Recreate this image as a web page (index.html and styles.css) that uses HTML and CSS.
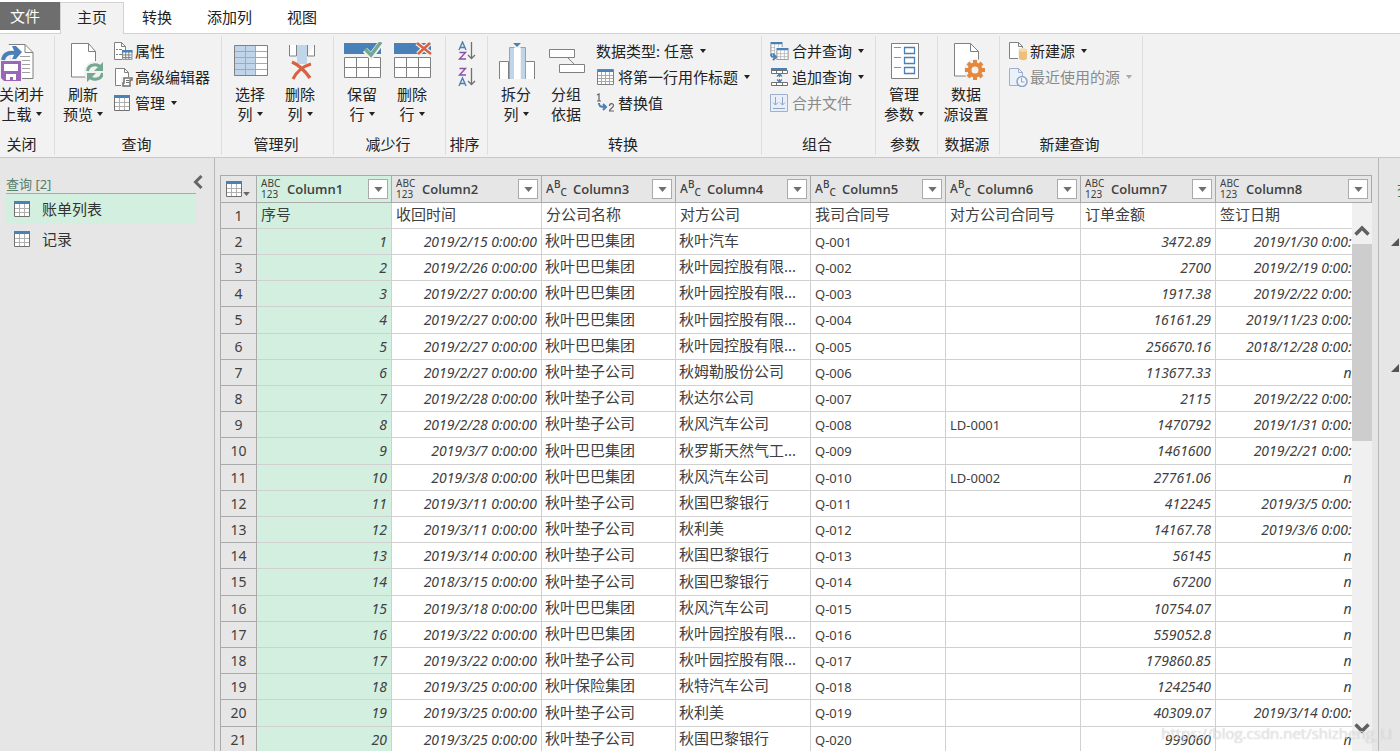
FILE: index.html
```html
<!DOCTYPE html>
<html lang="zh-CN">
<head>
<meta charset="utf-8">
<title>Power Query 编辑器</title>
<link rel="stylesheet" href="styles.css">
</head>
<body>
<svg class="defs" aria-hidden="true">
  <symbol id="i-table" viewBox="0 0 16 16"><path fill="#fff" d="M0 0h16v16H0z"/><path fill="none" stroke="#b0b0b0" d="M5.5 3v12M10.5 3v12M1 7.5h14M1 11.5h14"/><path fill="none" stroke="#707070" d="M.5 3v12.5h15V3"/><path fill="#4a80b8" d="M0 0h16v3H0z"/></symbol>
  <symbol id="i-down" viewBox="0 0 10 6"><path d="M0 0h10L5 6z"/></symbol>
</svg>
<div class="app">
  <nav class="tabs">
    <button class="file">文件</button>
    <button class="tab active">主页</button>
    <button class="tab">转换</button>
    <button class="tab">添加列</button>
    <button class="tab">视图</button>
  </nav>

  <div class="ribbon">
    <section class="group g-close">
      <div class="tools">
        <button class="big">
          <svg viewBox="0 0 40 40"><path fill="#fff" stroke="#808080" d="M9 2.500h16l8 8v26H11z"/><path fill="none" stroke="#808080" d="M25 2.500v8h8"/><path stroke="#a0a0a0" d="M20 14.500h10M22 18.500h8M22 22.500h8M22 26.500h8M22 30.500h8"/><path fill="#f2f2f2" d="M0 3h10v17H0zM6 17h16v20H6z"/><path d="M3 18c1-6 6-8 12-7" fill="none" stroke="#4a80b8" stroke-width="4"/><path fill="#4a80b8" d="M12 4h4l6 6-6 7h-4l3-6z"/><path fill="#9a66b8" d="M1 19h20v20H4l-3-3z"/><path fill="#fff" d="M4 22h14v7H4zM6 32h10v6h-3v-3h-3v3H6z"/></svg>
          <span>关闭并<br>上载<i class="caret"></i></span>
        </button>
      </div>
      <h2>关闭</h2>
    </section>
    <section class="group g-query">
      <div class="tools">
        <button class="big">
          <svg viewBox="0 0 40 40"><path fill="#fff" stroke="#808080" d="M8.500 1.500h17l7 8V35h-24z"/><path fill="none" stroke="#808080" d="M25.500 1.500v8h7"/><circle cx="32" cy="30" r="11" fill="#f2f2f2"/><g fill="none" stroke="#74a893" stroke-width="3"><path d="M24.500 29c1-7 10-8 14-3"/><path d="M39.500 31c-1 7-10 8-14 3"/></g><path fill="#74a893" d="M40 20v9h-9zM24 40v-9h9z"/></svg>
          <span>刷新<br>预览<i class="caret"></i></span>
        </button>
        <div class="stack">
          <button class="small"><svg viewBox="0 0 20 20"><path fill="#fff" stroke="#808080" d="M1.500 1.500h7l4 4v13h-11z"/><path fill="none" stroke="#808080" d="M8.500 1.500v4h4M3 8.500h2M6 8.500h3M3 13.500h2M6 13.500h3"/><g transform="translate(9 9) scale(.62)"><path fill="#fff" d="M0 0h16v16H0z"/><path fill="none" stroke="#777" stroke-width="1.500" d="M1 3v12h15V3M6 3v12M11 3v12M1 8h14M1 12h14"/><path fill="#4a80b8" d="M0 0h17v4H0z"/></g></svg>属性</button>
          <button class="small"><svg viewBox="0 0 20 20"><path fill="#fff" stroke="#808080" d="M2.500 1.500h9l4 4v13h-13z"/><path fill="none" stroke="#808080" d="M11.500 1.500v4h4"/><path fill="#f2f2f2" d="M8 10h12v10H8z"/><path fill="#fff" stroke="#707070" stroke-width="1.500" d="M11 11h8v2h-2v6h-7v-3h1z"/><path stroke="#707070" d="M13 13.500h3M13 15.500h3"/></svg>高级编辑器</button>
          <button class="small"><svg viewBox="0 0 20 20"><use href="#i-table" x="1" y="2" width="16" height="16"/></svg>管理<i class="caret"></i></button>
        </div>
      </div>
      <h2>查询</h2>
    </section>
    <section class="group g-cols">
      <div class="tools">
        <button class="big">
          <svg viewBox="0 0 40 40"><path fill="#fff" d="M4 4h33v30H4z"/><path fill="#c0d4ea" d="M4 4h22v30H4z"/><path fill="none" stroke="#a8a8a8" d="M15.500 4v29M25.500 4v29M5 9.500h32M5 15.500h32M5 21.500h32M5 27.500h32"/><path fill="none" stroke="#808080" d="M4.500 3.500h33v30h-33z"/></svg>
          <span>选择<br>列<i class="caret"></i></span>
        </button>
        <button class="big">
          <svg viewBox="0 0 40 40"><path fill="#fff" stroke="#808080" d="M9.500 3v11h7V3M27.500 14V3M27.500 14h7V3"/><path fill="#c0d4ea" d="M17 3h10v19H17z"/><path fill="none" stroke="#d9613f" stroke-width="3.500" d="M12 20c7 3 13 9 18 16"/><path fill="none" stroke="#d9613f" stroke-width="3" d="M31 22c-7 2-14 7-18 15"/></svg>
          <span>删除<br>列<i class="caret"></i></span>
        </button>
      </div>
      <h2>管理列</h2>
    </section>
    <section class="group g-rows">
      <div class="tools">
        <button class="big">
          <svg viewBox="0 0 40 40"><path fill="#4a80b8" d="M2 1h37v11H2z"/><path fill="#fff" stroke="#808080" d="M2.500 15.500h36v20h-36zM14.500 15.500v20M26.500 15.500v20M2.500 25.500h36"/><path fill="none" stroke="#f2f2f2" stroke-width="6" d="M23 8l6 6L39 1"/><path fill="none" stroke="#74a893" stroke-width="3.500" d="M23 7l6 6L39 0"/></svg>
          <span>保留<br>行<i class="caret"></i></span>
        </button>
        <button class="big">
          <svg viewBox="0 0 40 40"><path fill="#4a80b8" d="M2 1h37v11H2z"/><path fill="#fff" stroke="#808080" d="M2.500 15.500h36v20h-36zM14.500 15.500v20M26.500 15.500v20M2.500 25.500h36"/><path fill="none" stroke="#f2f2f2" stroke-width="5" d="M25 1l14 11M38 1L26 12"/><path fill="none" stroke="#d9613f" stroke-width="2.500" d="M25 1l14 11M38 1L26 12"/></svg>
          <span>删除<br>行<i class="caret"></i></span>
        </button>
      </div>
      <h2>减少行</h2>
    </section>
    <section class="group g-sort">
      <div class="tools sorts">
        <button class="sort" aria-label="升序排序"><svg viewBox="0 0 20 20"><path fill="none" stroke="#4a80b8" stroke-width="1.400" d="M2 9l3.500-8L9 9M3 6.500h5"/><path fill="none" stroke="#8c50a8" stroke-width="1.400" d="M2.500 11.500h6l-6 6.500h6.500"/><path fill="none" stroke="#707070" stroke-width="1.300" d="M14.500 1v16M11 14l3.500 3.500L18 14"/></svg></button>
        <button class="sort" aria-label="降序排序"><svg viewBox="0 0 20 20"><path fill="none" stroke="#8c50a8" stroke-width="1.400" d="M2.500 1.500h6L2.500 8H9"/><path fill="none" stroke="#4a80b8" stroke-width="1.400" d="M2 19l3.500-8L9 19M3 16.500h5"/><path fill="none" stroke="#707070" stroke-width="1.300" d="M14.500 1v16M11 14l3.500 3.500L18 14"/></svg></button>
      </div>
      <h2>排序</h2>
    </section>
    <section class="group g-transform">
      <div class="tools">
        <button class="big">
          <svg viewBox="0 0 40 40"><path fill="#fff" stroke="#808080" d="M3.500 37V19.500h9V37M29.500 37V19.500h9V37"/><path fill="#c0d4ea" d="M14 5h4v32h-4zM25 5h4v32h-4z"/><path fill="none" stroke="#a0a0a0" d="M13.500 37V5.500h5M29.500 37V5.500h-5"/><path fill="#fff" d="M18 6h6v31h-6z"/><path fill="#4a80b8" d="M17 1h8l-4 4z"/></svg>
          <span>拆分<br>列<i class="caret"></i></span>
        </button>
        <button class="big">
          <svg viewBox="0 0 40 40"><path fill="none" stroke="#808080" d="M22 16l7 7"/><path fill="#fff" stroke="#808080" d="M3.500 7.500h25v8h-25zM13.500 22.500h25v8h-25z"/></svg>
          <span>分组<br>依据</span>
        </button>
        <div class="stack">
          <button class="small">数据类型: 任意<i class="caret"></i></button>
          <button class="small"><svg viewBox="0 0 20 20"><path fill="#fff" stroke="#808080" d="M1.500 2.500h16v15h-16z"/><path fill="#4a80b8" d="M2 3h15v2H2z"/><path fill="none" stroke="#a8a8a8" d="M5.500 5v12M9.500 5v12M13.500 5v12M2 8.500h15M2 11.500h15M2 14.500h15"/></svg>将第一行用作标题<i class="caret"></i></button>
          <button class="small"><svg viewBox="0 0 20 20"><path fill="none" stroke="#606060" stroke-width="1.200" d="M1 2l2-1v7M1 8h4M13.500 13c0-3 4-3 4-.5 0 2-4 3.500-4 5.500H18"/><path fill="none" stroke="#4a80b8" stroke-width="2" d="M3 10c0 3 1 4 6 4M7 11l3 3-3 3"/></svg>替换值</button>
        </div>
      </div>
      <h2>转换</h2>
    </section>
    <section class="group g-combine">
      <div class="tools">
        <div class="stack">
          <button class="small"><svg viewBox="0 0 20 20"><use href="#i-table" x="0" y="1" width="13" height="12"/><path fill="#f2f2f2" d="M5 6h15v14H5z"/><use href="#i-table" x="6" y="7" width="13" height="12"/><path fill="none" stroke="#4a80b8" stroke-width="2" d="M1 13c0 3 1 3 5 3M3 13l3 3-3 3"/></svg>合并查询<i class="caret"></i></button>
          <button class="small"><svg viewBox="0 0 20 20"><path fill="#4a80b8" d="M1 1h16v3H1z"/><path fill="#fff" stroke="#707070" d="M1.500 3.500h16v3h-16zM1.500 15.500h16v3h-16zM6.500 4v2M12.500 4v2M6.500 16v2M12.500 16v2"/><path fill="none" stroke="#4a80b8" stroke-width="1.300" d="M9.500 7v3M7 9.500L9.500 7 12 9.500M9.500 12v3M7 12.500l2.500 2.500 2.500-2.500"/></svg>追加查询<i class="caret"></i></button>
          <button class="small" disabled><svg viewBox="0 0 20 20"><path fill="#e8eff8" stroke="#9fb0cc" d="M.5 1.500h17v17H.500z"/><path fill="none" stroke="#8fa5c8" d="M3 15.500h12M5.500 4v8M3 9.500l2.500 2.500L8 9.500M12.500 4v8M10 9.500l2.500 2.500L15 9.500"/></svg>合并文件</button>
        </div>
      </div>
      <h2>组合</h2>
    </section>
    <section class="group g-params">
      <div class="tools">
        <button class="big">
          <svg viewBox="0 0 40 40"><path fill="#fff" stroke="#808080" d="M7.500 1.500h27v35h-27z"/><path stroke="#909090" d="M10 5.500h7M10 15.500h7M10 25.500h7"/><path fill="#fff" stroke="#4a80b8" stroke-width="1.300" d="M20.500 5.500h10v6h-10zM20.500 15.500h10v6h-10zM20.500 25.500h10v6h-10z"/></svg>
          <span>管理<br>参数<i class="caret"></i></span>
        </button>
      </div>
      <h2>参数</h2>
    </section>
    <section class="group g-source">
      <div class="tools">
        <button class="big">
          <svg viewBox="0 0 40 40"><path fill="#fff" stroke="#808080" d="M8.500 1.500h16l8 8V34h-24z"/><path fill="none" stroke="#808080" d="M24.500 1.500v8h8"/><circle cx="29" cy="28" r="11" fill="#f2f2f2"/><circle cx="29" cy="28" r="5.500" fill="none" stroke="#e5873c" stroke-width="4"/><path fill="none" stroke="#e5873c" stroke-width="4" d="M29 18v4M29 34v4M19 28h4M35 28h4M22 21l3 3M33 32l3 3M22 35l3-3M33 24l3-3"/></svg>
          <span>数据<br>源设置</span>
        </button>
      </div>
      <h2>数据源</h2>
    </section>
    <section class="group g-new">
      <div class="tools">
        <div class="stack">
          <button class="small"><svg viewBox="0 0 20 20"><path fill="#fff" stroke="#808080" d="M1.500 1.500h9l4 4v12h-13z"/><path fill="none" stroke="#808080" d="M10.500 1.500v4h4"/><path fill="#f2f2f2" d="M10 7h10v12H10z"/><path fill="#ecc07c" d="M11 9v8c0 3 8 3 8 0V9z"/><ellipse cx="15" cy="9" rx="4" ry="1.800" fill="#f5d9a8"/></svg>新建源<i class="caret"></i></button>
          <button class="small" disabled><svg viewBox="0 0 20 20"><path fill="#eaf1fa" stroke="#9fb0cc" d="M1.500 1.500h9l4 4v13h-13z"/><path fill="none" stroke="#9fb0cc" d="M10.500 1.500v4h4"/><circle cx="14" cy="14.500" r="5" fill="#f2f6fb" stroke="#8fa5c8" stroke-width="1.500"/><path fill="none" stroke="#8fa5c8" d="M13.500 11v4h3"/></svg>最近使用的源<i class="caret"></i></button>
        </div>
      </div>
      <h2>新建查询</h2>
    </section>
  </div>

  <div class="work">
    <aside class="queries">
      <div class="qhead"><span>查询 [2]</span><button aria-label="折叠"><svg viewBox="0 0 10 14"><path fill="none" stroke="#666" stroke-width="3" d="M8.500 1L2.500 7l6 6"/></svg></button></div>
      <button class="query selected"><svg><use href="#i-table"/></svg>账单列表</button>
      <button class="query"><svg><use href="#i-table"/></svg>记录</button>
    </aside>

    <main class="preview">
      <div class="sheet">
        <table>
          <colgroup><col class="c-num"><col class="c-std"><col class="c-date"><col class="c-name"><col class="c-std"><col class="c-std"><col class="c-std"><col class="c-std"><col></colgroup>
          <thead><tr>
            <th><div class="corner"><svg class="grid"><use href="#i-table"/></svg><svg class="tri"><use href="#i-down"/></svg></div></th>
            <th class="sel"><div class="head"><span class="any">ABC<br>123</span><b>Column1</b><button aria-label="筛选 Column1"><svg><use href="#i-down"/></svg></button></div></th>
            <th><div class="head"><span class="any">ABC<br>123</span><b>Column2</b><button aria-label="筛选 Column2"><svg><use href="#i-down"/></svg></button></div></th>
            <th><div class="head"><span class="abc">A<sup>B</sup><sub>C</sub></span><b>Column3</b><button aria-label="筛选 Column3"><svg><use href="#i-down"/></svg></button></div></th>
            <th><div class="head"><span class="abc">A<sup>B</sup><sub>C</sub></span><b>Column4</b><button aria-label="筛选 Column4"><svg><use href="#i-down"/></svg></button></div></th>
            <th><div class="head"><span class="abc">A<sup>B</sup><sub>C</sub></span><b>Column5</b><button aria-label="筛选 Column5"><svg><use href="#i-down"/></svg></button></div></th>
            <th><div class="head"><span class="abc">A<sup>B</sup><sub>C</sub></span><b>Column6</b><button aria-label="筛选 Column6"><svg><use href="#i-down"/></svg></button></div></th>
            <th><div class="head"><span class="any">ABC<br>123</span><b>Column7</b><button aria-label="筛选 Column7"><svg><use href="#i-down"/></svg></button></div></th>
            <th><div class="head"><span class="any">ABC<br>123</span><b>Column8</b><button aria-label="筛选 Column8"><svg><use href="#i-down"/></svg></button></div></th>
          </tr></thead>
          <tbody>
            <tr class="titles"><th>1<td>序号<td>收回时间<td>分公司名称<td>对方公司<td>我司合同号<td>对方公司合同号<td>订单金额<td>签订日期
            <tr><th>2<td>1<td>2019/2/15 0:00:00<td>秋叶巴巴集团<td>秋叶汽车<td>Q-001<td><td>3472.89<td>2019/1/30 0:00:00
            <tr><th>3<td>2<td>2019/2/26 0:00:00<td>秋叶巴巴集团<td>秋叶园控股有限...<td>Q-002<td><td>2700<td>2019/2/19 0:00:00
            <tr><th>4<td>3<td>2019/2/27 0:00:00<td>秋叶巴巴集团<td>秋叶园控股有限...<td>Q-003<td><td>1917.38<td>2019/2/22 0:00:00
            <tr><th>5<td>4<td>2019/2/27 0:00:00<td>秋叶巴巴集团<td>秋叶园控股有限...<td>Q-004<td><td>16161.29<td>2019/11/23 0:00:00
            <tr><th>6<td>5<td>2019/2/27 0:00:00<td>秋叶巴巴集团<td>秋叶园控股有限...<td>Q-005<td><td>256670.16<td>2018/12/28 0:00:00
            <tr><th>7<td>6<td>2019/2/27 0:00:00<td>秋叶垫子公司<td>秋姆勒股份公司<td>Q-006<td><td>113677.33<td>null
            <tr><th>8<td>7<td>2019/2/28 0:00:00<td>秋叶垫子公司<td>秋达尔公司<td>Q-007<td><td>2115<td>2019/2/22 0:00:00
            <tr><th>9<td>8<td>2019/2/28 0:00:00<td>秋叶垫子公司<td>秋风汽车公司<td>Q-008<td>LD-0001<td>1470792<td>2019/1/31 0:00:00
            <tr><th>10<td>9<td>2019/3/7 0:00:00<td>秋叶巴巴集团<td>秋罗斯天然气工...<td>Q-009<td><td>1461600<td>2019/2/21 0:00:00
            <tr><th>11<td>10<td>2019/3/8 0:00:00<td>秋叶巴巴集团<td>秋风汽车公司<td>Q-010<td>LD-0002<td>27761.06<td>null
            <tr><th>12<td>11<td>2019/3/11 0:00:00<td>秋叶垫子公司<td>秋国巴黎银行<td>Q-011<td><td>412245<td>2019/3/5 0:00:00
            <tr><th>13<td>12<td>2019/3/11 0:00:00<td>秋叶垫子公司<td>秋利美<td>Q-012<td><td>14167.78<td>2019/3/6 0:00:00
            <tr><th>14<td>13<td>2019/3/14 0:00:00<td>秋叶垫子公司<td>秋国巴黎银行<td>Q-013<td><td>56145<td>null
            <tr><th>15<td>14<td>2018/3/15 0:00:00<td>秋叶垫子公司<td>秋国巴黎银行<td>Q-014<td><td>67200<td>null
            <tr><th>16<td>15<td>2019/3/18 0:00:00<td>秋叶巴巴集团<td>秋风汽车公司<td>Q-015<td><td>10754.07<td>null
            <tr><th>17<td>16<td>2019/3/22 0:00:00<td>秋叶巴巴集团<td>秋叶园控股有限...<td>Q-016<td><td>559052.8<td>null
            <tr><th>18<td>17<td>2019/3/22 0:00:00<td>秋叶垫子公司<td>秋叶园控股有限...<td>Q-017<td><td>179860.85<td>null
            <tr><th>19<td>18<td>2019/3/25 0:00:00<td>秋叶保险集团<td>秋特汽车公司<td>Q-018<td><td>1242540<td>null
            <tr><th>20<td>19<td>2019/3/25 0:00:00<td>秋叶垫子公司<td>秋利美<td>Q-019<td><td>40309.07<td>2019/3/14 0:00:00
            <tr><th>21<td>20<td>2019/3/25 0:00:00<td>秋叶垫子公司<td>秋国巴黎银行<td>Q-020<td><td>999060<td>null
          </tbody>
        </table>
        <div class="scrollbar">
          <button aria-label="向上"><svg viewBox="0 0 16 12"><path fill="none" stroke="#606060" stroke-width="3.500" d="M1.500 10.500L8 4l6.500 6.500"/></svg></button>
          <div class="thumb"></div>
          <button class="end" aria-label="向下"><svg viewBox="0 0 16 12"><path fill="none" stroke="#606060" stroke-width="3.500" d="M1.500 1.500L8 8l6.500-6.500"/></svg></button>
        </div>
      </div>
    </main>

    <aside class="settings">
      <h2>查询设置</h2>
      <button aria-label="属性"><svg viewBox="0 0 8 8"><path fill="#555" d="M8 0v8H0z"/></svg></button>
      <button aria-label="应用的步骤"><svg viewBox="0 0 8 8"><path fill="#555" d="M8 0v8H0z"/></svg></button>
    </aside>
  </div>
  <div class="watermark">https://blog.csdn.net/shizheng_Li</div>
</div>
</body>
</html>
```
FILE: styles.css
```css
* { box-sizing: border-box; }
body { margin: 0; font: 15px/20px "Noto Sans", "Noto Sans CJK SC", sans-serif; color: #222; background: #fff; }
button { margin: 0; padding: 0; border: 0; background: none; color: inherit; font: inherit; }
h2 { margin: 0; font-size: 15px; font-weight: 400; }
svg { display: block; flex: none; }
.defs { position: absolute; width: 0; height: 0; }
.app { position: relative; display: flex; flex-direction: column; height: 100vh; overflow: hidden; }

.tabs { display: flex; gap: 1px; flex: none; padding-top: 2px; height: 34px; border-bottom: 1px solid #d2d2d2; }
.file { height: 28px; padding: 0 20px 0 10px; margin-right: -1px; background: #6e6e6e; color: #fff; }
.tab { height: 32px; padding: 0 16px 4px; border: 1px solid transparent; border-bottom: 0; }
.tab.active { background: #f2f2f2; border-color: #d2d2d2; }

.ribbon { display: flex; flex: none; height: 124px; padding: 2px 0; background: #f2f2f2; border-bottom: 1px solid #c8c8c8; }
.group { display: flex; flex-direction: column; justify-content: space-between; flex: none; padding: 0 2px 1px 3px; border-right: 1px solid #dedede; white-space: nowrap; }
.group h2 { padding-right: 4px; text-align: center; }
.tools { display: flex; }
.big { width: 50px; padding-top: 6px; }
.big svg { width: 40px; height: 40px; margin: 0 auto 2px; }
.big span { display: block; margin: 0 -10px; text-align: center; }
.stack { padding: 2px 0 0 5px; }
.small { display: flex; align-items: center; gap: 2px; height: 26px; }
.small svg { width: 20px; height: 20px; }
.small:disabled { color: #8a8a8a; }
.caret { display: inline-block; margin-left: 4px; border: 3px solid transparent; border-top: 4px solid #222; border-bottom: 0; vertical-align: 4px; }
.small:disabled .caret { border-top-color: #aaa; }
.g-close { width: 55px; padding: 0 11px 1px 0; }
.g-close .big { width: 43px; }
.g-close .big svg { margin-left: 0; }
.g-close h2 { padding: 0; }
.g-query { width: 167px; }
.g-cols, .g-rows { width: 112px; }
.g-sort { width: 42px; padding: 0 0 1px; }
.g-transform { width: 274px; }
.g-combine { width: 114px; }
.g-params, .g-source { width: 62px; }
.g-new { width: 143px; }
.sorts { flex-direction: column; align-items: center; gap: 6px; padding-top: 5px; }
.sort svg { width: 20px; height: 20px; }

.work { display: flex; flex: 1; min-height: 0; background: #e6e6e6; }
.queries { flex: none; width: 215px; padding: 16px 18px 0 6px; border-right: 1px solid #b8b8b8; }
.qhead { display: flex; justify-content: space-between; height: 20px; border-bottom: 1px solid #aaa; color: #558068; font-size: 13px; }
.qhead button { margin-right: -7px; }
.qhead svg { width: 10px; height: 14px; margin-bottom: 4px; }
.query { display: flex; align-items: center; gap: 12px; width: 100%; height: 30px; padding-left: 8px; color: #333; }
.query svg { width: 16px; height: 16px; }
.query.selected { background: #d2efe0; }

.preview { flex: 1; min-width: 0; padding: 17px 6px 0 5px; }
.sheet { position: relative; height: 100%; overflow: hidden; border-left: 1px solid #aaa; border-top: 1px solid #aaa; color: #404040; }
table { width: 100%; table-layout: fixed; border-collapse: separate; border-spacing: 0; font-size: 13px; }
.c-num { width: 36px; }
.c-std { width: 135px; }
.c-date { width: 150px; }
.c-name { width: 134px; }
th { padding: 0; background: #e6e6e6; border-right: 1px solid #aaa; border-bottom: 1px solid #aaa; }
thead th { height: 27px; }
thead .sel { background: #d2efe0; }
.corner { display: flex; align-items: center; gap: 1px; padding-left: 5px; }
.corner .grid { width: 16px; height: 16px; }
.corner .tri { width: 7px; height: 4px; margin-top: 10px; fill: #666; }
.head { display: flex; align-items: center; padding: 0 3px 0 4px; }
.head b { flex: 1; text-align: left; font-family: "Open Sans", sans-serif; font-weight: 600; }
.head button { display: grid; place-items: center; width: 20px; height: 20px; background: #fff; border: 1px solid #aaa; }
.head button svg { width: 9px; height: 5px; fill: #707070; }
.any { width: 26px; text-align: left; font-size: 10px; line-height: 11px; font-weight: 400; }
.abc { width: 27px; text-align: left; font-size: 12px; line-height: 16px; font-weight: 500; }
.abc sup, .abc sub { font-size: 10px; line-height: 0; }
tbody th { height: 26px; font-size: 14px; font-weight: 400; }
td { height: 26px; padding: 0 4px; overflow: hidden; border-right: 1px solid #d0d0d0; border-bottom: 1px solid #d0d0d0; background: #fff; white-space: nowrap; }
tbody tr:nth-child(5n) > * { height: 27px; }
td:nth-child(2) { background: #d2efe0; }
td:nth-child(2), td:nth-child(3), td:nth-child(8), td:nth-child(9) { text-align: right; font-size: 14px; font-style: italic; }
td:nth-child(4), td:nth-child(5), .titles td:nth-child(n) { padding: 0 4px 3px 3px; font-size: 15px; }
.titles td:nth-child(n) { padding-left: 4px; text-align: left; font-style: normal; }

.scrollbar { position: absolute; top: 27px; right: 0; bottom: 0; display: flex; flex-direction: column; width: 20px; background: #f0f0f0; }
.scrollbar button { display: flex; justify-content: center; align-items: flex-end; height: 41px; padding-bottom: 8px; }
.scrollbar svg { width: 16px; height: 12px; }
.scrollbar .end { margin-top: auto; padding-bottom: 16px; }
.thumb { height: 36%; background: #cdcdcd; }

.settings { flex: none; width: 22px; padding: 22px 0 0 12px; overflow: hidden; border-left: 1px solid #b8b8b8; }
.settings h2 { margin: 0 0 38px 6px; height: 20px; color: #2f7d4f; white-space: nowrap; }
.settings button { display: block; margin-bottom: 118px; }
.settings svg { width: 8px; height: 8px; }

.watermark { position: absolute; right: 8px; bottom: 8px; font: 15px/20px "Open Sans", sans-serif; color: rgba(255, 255, 255, .6); text-shadow: 0 0 1px rgba(120, 120, 120, .5); }
```
